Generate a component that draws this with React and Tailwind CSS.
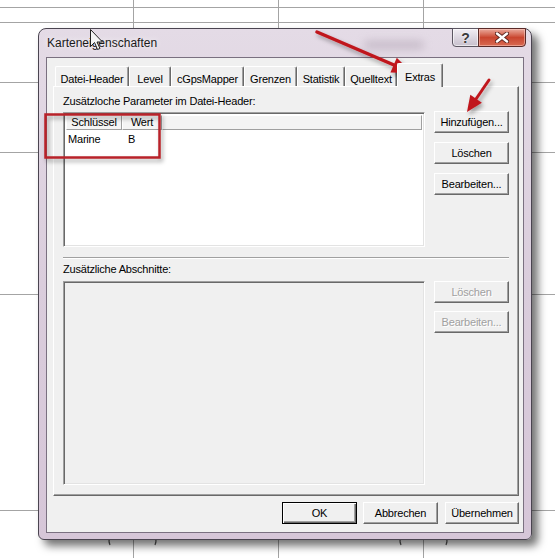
import React from "react";

function Grid() {
  const h = [7, 22, 82, 152, 294, 510];
  const v = [133, 278, 423];
  return (
    <svg className="absolute inset-0" width="555" height="558">
      {h.map((y) => (
        <line key={"h" + y} x1="0" x2="555" y1={y + 0.5} y2={y + 0.5} stroke="#a4a4a4" strokeWidth="1" />
      ))}
      {v.map((x) => (
        <line key={"v" + x} y1="0" y2="558" x1={x + 0.5} x2={x + 0.5} stroke="#a4a4a4" strokeWidth="1" />
      ))}
      {[108, 399].map((x) => (
        <g key={"b" + x} stroke="#555" strokeWidth="1.2" fill="none">
          <path d={`M${x + 2},537 Q${x},541 ${x + 2},545`} />
          <path d={`M${x + 47},537 Q${x + 49},541 ${x + 47},545`} />
        </g>
      ))}
    </svg>
  );
}

function Overlay() {
  return (
    <svg className="absolute inset-0 pointer-events-none" width="555" height="558">
      <defs>
        <filter id="sh" x="-20%" y="-20%" width="140%" height="140%">
          <feDropShadow dx="2" dy="3" stdDeviation="2" floodColor="#000" floodOpacity="0.35" />
        </filter>
      </defs>
      <g filter="url(#sh)">
        <rect x="45.5" y="114.5" width="114" height="43" fill="none" stroke="#b8202a" strokeWidth="2.5" />
        <line x1="317" y1="32" x2="394" y2="65" stroke="#c0171d" strokeWidth="3.5" strokeLinecap="round" />
        <polygon points="412,73 390.4,72.4 396.8,57.8" fill="#c0171d" />
        <line x1="489" y1="80" x2="476" y2="99" stroke="#c0171d" strokeWidth="3" strokeLinecap="round" />
        <polygon points="467,112 470.3,94.8 481.9,102.8" fill="#c0171d" />
      </g>
      <g transform="translate(90.5,29.5)">
        <path d="M0,0 L0,17 L4,13 L7,20 L9.5,19 L6.5,12.5 L12,12.5 Z" fill="#f4f4f4" stroke="#222" strokeWidth="1" strokeLinejoin="round" />
      </g>
    </svg>
  );
}

function Btn({ children, disabled, def, className = "" }) {
  return (
    <div
      className={
        "flex items-center justify-center h-[22px] bg-[#f0f0f0] " +
        (def
          ? "border border-[#000] shadow-[inset_1px_1px_0_#fff,inset_-1px_-1px_0_#696969,inset_-2px_-2px_0_#a0a0a0] "
          : "border border-t-white border-l-white border-b-[#696969] border-r-[#696969] shadow-[inset_-1px_-1px_0_#a0a0a0] ") +
        (disabled ? "text-[#a0a0a0] [text-shadow:1px_1px_0_#fff] " : "text-black ") +
        className
      }
    >
      {children}
    </div>
  );
}

function Tab({ label, w, selected }) {
  if (selected) {
    return (
      <div
        className={
          "relative z-10 -mb-[1px] h-[24px] flex items-start justify-center pt-[5px] bg-[#f0f0f0] border-l border-t border-r border-l-white border-t-white border-r-[#696969] rounded-t-[2px] shadow-[inset_-1px_0_0_#a0a0a0] " +
          w
        }
      >
        {label}
      </div>
    );
  }
  return (
    <div
      className={
        "h-[20px] flex items-start justify-center pt-[4px] bg-[#f0f0f0] border-l border-t border-r border-l-white border-t-white border-r-[#696969] rounded-t-[2px] shadow-[inset_-1px_0_0_#a0a0a0] " +
        w
      }
    >
      {label}
    </div>
  );
}

function ListBox({ className = "", children }) {
  return (
    <div
      className={
        "border border-t-[#a0a0a0] border-l-[#a0a0a0] border-b-white border-r-white shadow-[inset_1px_1px_0_#696969,inset_-1px_-1px_0_#e3e3e3] " +
        className
      }
    >
      {children}
    </div>
  );
}

function Window() {
  return (
    <div className="w-[494px] h-[512px] rounded-t-[8px] rounded-b-[6px] border border-[#4a4450] bg-gradient-to-b from-[#e4dbe6] via-[#dacddc] to-[#d6c6d8] shadow-[6px_6px_9px_rgba(0,0,0,0.55)] flex flex-col">
      {/* title bar */}
      <div className="h-[28px] flex items-start pr-[5px]">
        <span className="mt-[7px] ml-[8px] text-[12px] leading-[14px] tracking-normal text-[#1a1a1a] [text-shadow:0_0_6px_#fff]">
          Karteneigenschaften
        </span>
        <div className="ml-auto mr-[28px] mt-[12px] w-[60px] h-[8px] rounded-full bg-[#b9adbb] blur-[4px] opacity-70" />
        <div className="-mt-[1px] flex">
          <div className="w-[27px] h-[19px] flex items-center justify-center rounded-bl-[4px] border border-[#5c5662] bg-gradient-to-b from-[#f2eef4] via-[#dcd6e0] to-[#c7bfcc] shadow-[inset_0_0_0_1px_rgba(255,255,255,0.6)] text-[#3a3a3a] text-[14px] font-bold leading-none [text-shadow:0_0_3px_#fff]">
            ?
          </div>
          <div className="w-[48px] h-[19px] -ml-[1px] flex items-center justify-center rounded-br-[4px] border border-[#5a2a28] bg-gradient-to-b from-[#e9a99d] via-[#c9452f] to-[#d86a52] shadow-[inset_0_0_0_1px_rgba(255,210,200,0.5)]">
            <svg width="14" height="11" viewBox="0 0 14 11">
              <path d="M2,1.5 L12,9.5 M12,1.5 L2,9.5" stroke="#5a2520" strokeWidth="4.2" strokeLinecap="round" />
              <path d="M2,1.5 L12,9.5 M12,1.5 L2,9.5" stroke="#ffffff" strokeWidth="2.4" strokeLinecap="round" />
            </svg>
          </div>
        </div>
      </div>

      {/* client */}
      <div className="ml-[7px] mr-[7px] mb-[6px] h-[476px] border border-[#7a7080] bg-[#f0f0f0] tracking-[-0.2px]">
        <div className="flex flex-col pl-[6px] pr-[4px] pt-[5px]">
          {/* tabs */}
          <div className="h-[23px] flex items-end pl-[2px]">
            <Tab label="Datei-Header" w="w-[74px]" />
            <Tab label="Level" w="w-[42px]" />
            <Tab label="cGpsMapper" w="w-[73px]" />
            <Tab label="Grenzen" w="w-[53px]" />
            <Tab label="Statistik" w="w-[48px]" />
            <Tab label="Quelltext" w="w-[52px]" />
            <Tab label="Extras" w="w-[46px]" selected />
          </div>

          {/* panel */}
          <div className="h-[410px] border border-t-white border-l-white border-r-[#696969] border-b-[#696969] shadow-[inset_-1px_-1px_0_#a0a0a0] px-[9px] flex flex-col">
            <div className="mt-[8px] h-[13px] leading-[13px]">Zusätzloche Parameter im Datei-Header:</div>
            <div className="mt-[4px] flex">
              <ListBox className="w-[362px] h-[135px] bg-white p-[2px]">
                <div className="flex h-[15px] leading-[13px] text-black">
                  <div className="w-[56px] border border-t-white border-l-white border-r-[#a0a0a0] border-b-[#a0a0a0] bg-[#f4f4f4] text-center">
                    Schlüssel
                  </div>
                  <div className="w-[40px] border border-t-white border-l-white border-r-[#a0a0a0] border-b-[#a0a0a0] bg-[#f4f4f4] text-center">
                    Wert
                  </div>
                  <div className="flex-1 border border-t-white border-l-white border-r-[#a0a0a0] border-b-[#a0a0a0] bg-[#f4f4f4]" />
                </div>
                <div className="flex h-[17px] items-center mt-[1px]">
                  <div className="w-[60px] pl-[2px]">Marine</div>
                  <div className="pl-[2px]">B</div>
                </div>
              </ListBox>
              <div className="ml-[9px] -mt-[1px] flex flex-col gap-[9px]">
                <Btn className="w-[75px]">Hinzufügen...</Btn>
                <Btn className="w-[75px]">Löschen</Btn>
                <Btn className="w-[75px]">Bearbeiten...</Btn>
              </div>
            </div>

            <div className="mt-[10px] h-[2px] border-t border-t-[#a0a0a0] border-b border-b-white" />

            <div className="mt-[4px] h-[13px] leading-[13px]">Zusätzliche Abschnitte:</div>
            <div className="mt-[5px] flex">
              <ListBox className="w-[362px] h-[204px] bg-[#f0f0f0]" />
              <div className="ml-[9px] flex flex-col gap-[8px]">
                <Btn className="w-[75px]" disabled>Löschen</Btn>
                <Btn className="w-[75px]" disabled>Bearbeiten...</Btn>
              </div>
            </div>
          </div>

          {/* bottom buttons */}
          <div className="mt-[6px] flex justify-end">
            <Btn className="w-[75px]" def>OK</Btn>
            <Btn className="w-[75px] ml-[6px]">Abbrechen</Btn>
            <Btn className="w-[74px] ml-[7px]">Übernehmen</Btn>
          </div>
        </div>
      </div>
    </div>
  );
}

export default function App() {
  return (
    <div className="relative w-[555px] h-[558px] bg-white overflow-hidden font-['Liberation_Sans',Arial,sans-serif] text-[11px] text-black">
      <Grid />
      <div className="relative pl-[38px] pt-[28px]">
        <Window />
      </div>
      <Overlay />
    </div>
  );
}
